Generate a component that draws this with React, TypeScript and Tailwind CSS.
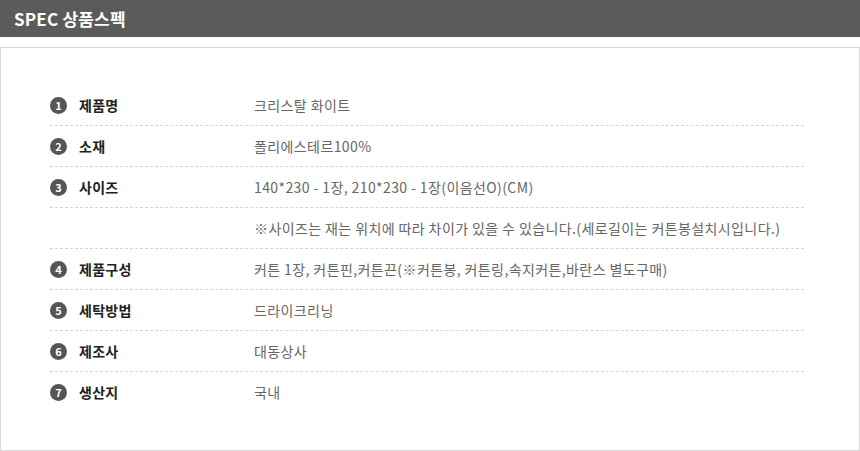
import React from "react";

type SpecRow = {
  no?: number;
  label?: string;
  value: string;
};

const rows: SpecRow[] = [
  { no: 1, label: "제품명", value: "크리스탈 화이트" },
  { no: 2, label: "소재", value: "폴리에스테르100%" },
  { no: 3, label: "사이즈", value: "140*230 - 1장, 210*230 - 1장(이음선O)(CM)" },
  { value: "※사이즈는 재는 위치에 따라 차이가 있을 수 있습니다.(세로길이는 커튼봉설치시입니다.)" },
  { no: 4, label: "제품구성", value: "커튼 1장, 커튼핀,커튼끈(※커튼봉, 커튼링,속지커튼,바란스 별도구매)" },
  { no: 5, label: "세탁방법", value: "드라이크리닝" },
  { no: 6, label: "제조사", value: "대동상사" },
  { no: 7, label: "생산지", value: "국내" },
];

const font = { fontFamily: '"Noto Sans CJK KR", "Noto Sans", sans-serif' };

const App = () => {
  return (
    <div className="w-[860px] h-[451px] bg-white" style={font}>
      {/* title bar */}
      <div className="h-[37px] bg-[#5b5b5b] flex items-center px-[14px]">
        <h2 className="text-white text-[17px] font-bold tracking-[0.2px]">SPEC 상품스펙</h2>
      </div>

      {/* spec box */}
      <div className="mt-[10px] h-[404px] border border-[#d9d9d9] pl-[49px] pr-[55px] pt-[37px]">
        {rows.map((row, i) => (
          <div
            key={i}
            className={`h-[41px] flex items-center ${
              i < rows.length - 1 ? "border-b border-dashed border-[#d6d6d6]" : ""
            }`}
          >
            <div className="w-[204px] flex items-center">
              {row.no && (
                <>
                  <span className="w-[17px] h-[17px] rounded-full bg-[#555555] text-white text-[11px] font-bold flex items-center justify-center leading-none">
                    {row.no}
                  </span>
                  <span className="ml-[12px] text-[14px] font-bold text-[#222222] tracking-[0.3px]">{row.label}</span>
                </>
              )}
            </div>
            <div className="text-[14px] text-[#666666] tracking-[0.4px]">{row.value}</div>
          </div>
        ))}
      </div>
    </div>
  );
};

export default App;
